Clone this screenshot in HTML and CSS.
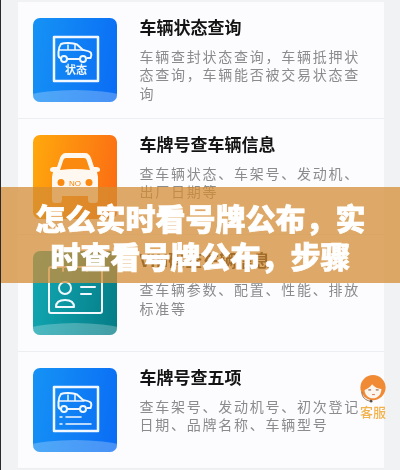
FILE: index.html
```html
<!DOCTYPE html>
<html lang="zh">
<head>
<meta charset="utf-8">
<title>怎么实时看号牌公布</title>
<link rel="stylesheet" href="styles.css">
</head>
<body>
<main class="page">
  <section class="list">
    <article class="row">
      <div class="tile tile-blue">
        <svg class="glyph" viewBox="0 0 84 84" aria-hidden="true">
          <rect x="21" y="19" width="44" height="44" class="line" stroke-width="2.500"/>
          <path class="line" stroke-width="2" d="M28 40c-2 0-2.500-1-2.500-3v-3c0-3 1-6 2.500-8 3-1.500 12-1.500 16 .5l6 5.500c3 .5 7 1 8 3 .5 1 .5 3-.5 5h-3M34 41h12.500"/>
          <path class="line" stroke-width="1.500" d="M26 32h25M35 27v5M42 27v5"/>
          <circle class="line" stroke-width="2" cx="31" cy="41" r="3"/>
          <circle class="line" stroke-width="2" cx="50" cy="41" r="3"/>
          <text x="43" y="56" class="tiny">状态</text>
        </svg>
        <span class="wave"></span>
      </div>
      <div class="copy">
        <h2>车辆状态查询</h2>
        <p>车辆查封状态查询，车辆抵押状态查询，车辆能否被交易状态查询</p>
      </div>
    </article>
    <article class="row">
      <div class="tile tile-orange">
        <svg class="glyph" viewBox="0 0 84 84" aria-hidden="true">
          <path class="fill" d="M21 32c-3 0-4 1-4 3 0 1 1 2 3 2l-1 5v22c0 3 1 4 3 4h4c2 0 3-1 3-4v-3h26v3c0 3 1 4 3 4h4c2 0 3-1 3-4V42l-1-5c2 0 3-1 3-2 0-2-1-3-4-3h-2l-3-9c-1-3-3-5-6-5H33c-3 0-5 2-6 5l-3 9z"/>
          <path class="cut" d="M27 35l3-9c.5-2 1.500-3 3-3h18c1.500 0 2.500 1 3 3l3 9c-10-1.500-20-1.500-30 0z"/>
          <circle class="cut" cx="28" cy="47.500" r="3.500"/>
          <circle class="cut" cx="56" cy="47.500" r="3.500"/>
          <text x="42" y="51" class="no">NO</text>
        </svg>
      </div>
      <div class="copy">
        <h2>车牌号查车辆信息</h2>
        <p>查车辆状态、车架号、发动机、出厂日期等</p>
      </div>
    </article>
    <article class="row">
      <div class="tile tile-teal">
        <svg class="glyph" viewBox="0 0 84 84" aria-hidden="true">
          <rect x="16" y="16" width="53" height="46" rx="2" class="line" stroke-width="2"/>
          <path class="line" stroke-width="2" d="M30 11v9M54 11v9"/>
          <circle class="line" stroke-width="2" cx="32" cy="37" r="6"/>
          <path class="line" stroke-width="2" d="M23 56c0-5 4-7 9-7s9 2 9 7zM48 36h14M48 43h10"/>
        </svg>
        <span class="wave"></span>
      </div>
      <div class="copy">
        <h2>VIN码查车辆信息</h2>
        <p>查车辆参数、配置、性能、排放标准等</p>
      </div>
    </article>
    <article class="row">
      <div class="tile tile-blue">
        <svg class="glyph" viewBox="0 0 84 84" aria-hidden="true">
          <rect x="21" y="19" width="44" height="44" class="line" stroke-width="2.500"/>
          <path class="line" stroke-width="2" d="M28 41c-2 0-2.500-1-2.500-3v-4c0-3 1-6 2.500-8 3-1.500 12-1.500 16 .5l6 5.500c3 .5 7 1 8 3 .5 1 .5 3-.5 5h-3M34 41h12.500"/>
          <path class="line" stroke-width="1.500" d="M26 33h25M35 27v6M42 27v6"/>
          <circle class="line" stroke-width="2" cx="31" cy="41" r="3"/>
          <circle class="line" stroke-width="2" cx="50" cy="41" r="3"/>
          <path class="line" stroke-width="1.500" d="M27 49h2M33 49h15M27 56h2M33 56h25"/>
        </svg>
        <span class="wave"></span>
      </div>
      <div class="copy">
        <h2>车牌号查五项</h2>
        <p>查车架号、发动机号、初次登记日期、品牌名称、车辆型号</p>
      </div>
    </article>
  </section>

  <aside class="agent">
    <svg class="agent-face" viewBox="0 0 30 30" aria-hidden="true">
      <circle cx="15" cy="13.500" r="13.500" fill="#f08a35"/>
      <path d="M6 16c3-1 6-3 8-6 3 3 6 5 10 5 0 6-4 10-9 10S6 21 6 16z" fill="#fdf6ee"/>
      <path d="M10 16h3M18 16h3" stroke="#6e4a30" stroke-width="1" fill="none"/>
      <path d="M14 21h3" stroke="#d96a3a" stroke-width="1" fill="none"/>
      <path d="M3 18c0 6 4 9 9 10" stroke="#8a6a50" stroke-width="1" fill="none"/>
      <circle cx="13" cy="28" r="1.400" fill="#57504a"/>
    </svg>
    <span class="agent-label">客服</span>
  </aside>

  <div class="banner">
    <h1>怎么实时看号牌公布，实时查看号牌公布，步骤</h1>
  </div>
</main>
</body>
</html>
```
FILE: styles.css
```css
* { box-sizing: border-box; }
html, body { margin: 0; padding: 0; }
body {
  width: 400px;
  height: 470px;
  overflow: hidden;
  background: #f1f2f4;
  font-family: "Noto Sans CJK SC", "Liberation Sans", sans-serif;
}
.page {
  position: relative;
  width: 400px;
  height: 470px;
  padding: 2px 16px 0 16.500px;
  border-left: 1.500px solid #2a2a2a;
  overflow: hidden;
}
.list { filter: blur(0.35px); }
.row {
  display: flex;
  gap: 23px;
  height: 116.670px;
  padding: 16px 15px 0;
  background: #fcfcfe;
  border-bottom: 1px solid #eceef1;
}
.tile {
  position: relative;
  flex: none;
  width: 84px;
  height: 84px;
  border-radius: 7px;
  overflow: hidden;
}
.tile-blue { background: linear-gradient(100deg, #1593f5, #0a6cf5); }
.tile-orange { background: linear-gradient(100deg, #ffa90c, #fb6a14); }
.tile-teal { background: linear-gradient(100deg, #11a9b4, #057c86); }
.glyph { display: block; width: 84px; height: 84px; }
.wave {
  position: absolute;
  left: -30px;
  right: -30px;
  bottom: -28px;
  height: 40px;
  border-radius: 50%;
  background: rgba(255, 255, 255, 0.25);
}
.line { fill: none; stroke: #f2f8ff; stroke-linecap: round; stroke-linejoin: round; }
.fill { fill: #fff8f0; }
.cut { fill: #fb8a10; }
.tiny { font-size: 11px; font-weight: 700; fill: #f2f8ff; text-anchor: middle; }
.no { font-size: 8px; font-weight: 500; fill: #f2860f; text-anchor: middle; font-family: "Liberation Sans", sans-serif; }
.copy { flex: 1; min-width: 0; margin-top: -3px; }
.copy h2 {
  margin: 0 0 8px;
  font-size: 17px;
  line-height: 24px;
  font-weight: 700;
  color: #141414;
}
.copy p {
  margin: 0;
  font-size: 14px;
  line-height: 18.300px;
  letter-spacing: 1.750px;
  color: #8b8b8d;
}
.banner {
  position: absolute;
  left: 0;
  right: 0;
  top: 187px;
  height: 96px;
  padding: 12px 30px 0;
  background: rgba(212, 140, 51, 0.74);
}
.banner h1 {
  margin: 0;
  font-size: 30px;
  line-height: 37.500px;
  font-weight: 900;
  text-align: center;
  color: #fff;
  -webkit-text-stroke: 0.7px #fff;
  filter: blur(0.3px);
}
.agent {
  position: absolute;
  right: 13px;
  top: 374px;
  display: flex;
  flex-direction: column;
  align-items: center;
  filter: blur(0.3px);
}
.agent-face { display: block; width: 28px; height: 30px; }
.agent-label {
  font-size: 13px;
  line-height: 15px;
  font-weight: 500;
  color: #f2b34f;
}
```
